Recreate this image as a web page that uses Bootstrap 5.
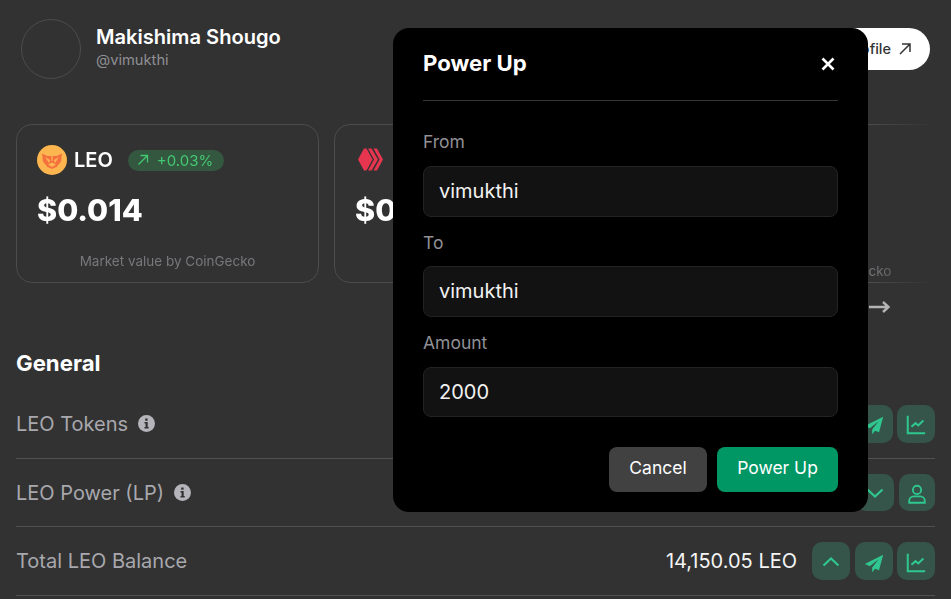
<!DOCTYPE html>
<html lang="en">
<head>
  <meta charset="UTF-8" />
  <meta name="viewport" content="width=device-width, initial-scale=1" />
  <title>Wallet - Power Up</title>
  <link href="https://cdn.jsdelivr.net/npm/bootstrap@5.3.0/dist/css/bootstrap.min.css" rel="stylesheet" />
  <style>
    html, body { height: 599px; overflow: hidden; }
    body { background: #323232; font-family: Inter, "Liberation Sans", sans-serif; color: #fff; }
    .wallet-page { padding: 19px 16px 0 16px; }
    .profile-head { height: 105px; padding-left: 5px; padding-right: 5px; }
    .name-gap { gap: 15px; }
    .avatar-ring { width: 60px; height: 60px; border: 1px solid #4c4c4c; border-radius: 50%; }
    .user-name { font-size: 20.1px; font-weight: 600; line-height: 24px; margin-top: 6px; }
    .user-handle { font-size: 14.7px; line-height: 20px; color: #8f8f95; margin-top: 1px; }
    .profile-btn { height: 42px; margin-top: 9px; padding: 0 19px 0 22px; border-radius: 21px; background: #fff; color: #333; font-size: 14.5px; font-weight: 500; border: 0; }
    .slider-mask { width: 919px; gap: 15px; overflow: hidden; -webkit-mask-image: linear-gradient(to right, #000 93%, transparent 100%); mask-image: linear-gradient(to right, #000 93%, transparent 100%); }
    .price-box { flex: 0 0 303px; height: 159px; border: 1px solid #4c4c4c; border-radius: 16px; padding: 20px 20px 0 20px; background: transparent; }
    .coin-head { gap: 7px; }
    .coin-name { font-size: 20px; font-weight: 600; line-height: 30px; }
    .trend-chip { height: 21px; padding: 0 11px 0 9px; border-radius: 11px; background: #33573f; color: #45c873; font-size: 15px; line-height: 21px; margin-left: 8px; }
    .price-value { font-size: 30.5px; font-weight: 800; line-height: 36px; margin-top: 17px; }
    .source-note { font-size: 13.5px; color: #77777c; text-align: center; margin-top: 24px; line-height: 18px; }
    .slide-arrows { height: 48px; padding-right: 45px; color: #b4b4b4; }
    .section-title { font-size: 22.2px; font-weight: 700; line-height: 28px; margin: 18px 0 13px 0; }
    .balance-row { height: 68.7px; border-bottom: 1px solid #515155; }
    .row-label { font-size: 20px; color: #a8a8ae; gap: 10px; }
    .row-value { font-size: 20px; font-weight: 400; color: #f4f4f4; margin-right: 11px; }
    .tile-set { gap: 4px; }
    .tile-set-wide { gap: 5px; }
    .icon-tile { width: 38px; height: 38px; padding: 0; border: 0; border-radius: 10px; background: #35544a; color: #2fc78f; flex: none; }
    .icon-tile svg { width: 22px; height: 22px; }
    .icon-tile .chev-icon { width: 24px; height: 24px; }
    .tile-short { height: 37px; }
    .tile-narrow { width: 36px; }
    .tile-mid { margin-right: 1px; }
    .up-dialog { width: 475px; margin: 28px 0 0 393px; }
    .up-panel { height: 484px; background: #000; border: 0; border-radius: 16px; padding: 0 30px; color: #fff; }
    .up-panel .modal-header { height: 73px; padding: 0; border-bottom: 1px solid #37373b; }
    .up-panel .modal-title { font-size: 22.2px; font-weight: 700; margin-top: -2px; }
    .x-btn { background: none; border: 0; padding: 0; color: #fff; width: 20px; height: 20px; }
    .up-panel .modal-body { padding: 29px 0 0 0; flex: 0 0 auto; }
    .field-label { font-size: 17.5px; color: #909096; line-height: 24px; margin: 0 0 12px 0; display: block; }
    .field-gap { margin-top: 14px; margin-bottom: 11px; }
    .field-last { margin-bottom: 12px; }
    .up-panel .form-control { height: 51px; background: #121212; border: 1px solid #232325; border-radius: 8px; color: #f2f2f2; font-size: 20px; padding: 0 15px 2px 15px; }
    .up-panel .input-last { height: 50px; padding-bottom: 0; }
    .up-panel .modal-footer { padding: 30px 0 0 0; border: 0; gap: 10px; }
    .up-panel .modal-footer .btn { margin: 0; height: 45px; font-size: 17.5px; font-weight: 400; border: 0; border-radius: 8px; color: #fff; padding: 0 0 2px 0; }
    .btn-cancel { width: 98px; background: #414141; }
    .btn-power { width: 121px; background: #019765; }
  </style>
</head>
<body>
  <div class="wallet-page">
    <div class="profile-head d-flex justify-content-between align-items-start">
      <div class="d-flex name-gap">
        <div class="avatar-ring"></div>
        <div>
          <div class="user-name">Makishima Shougo</div>
          <div class="user-handle">@vimukthi</div>
        </div>
      </div>
      <button class="btn profile-btn d-flex align-items-center gap-2">View Profile
        <svg width="12" height="12" viewBox="0 0 12 12" fill="none" stroke="currentColor" stroke-width="1.500"><path d="M1 11 11 1M3 1h8v8"/></svg>
      </button>
    </div>

    <div class="slider-mask d-flex">
      <div class="price-box">
        <div class="d-flex align-items-center coin-head">
          <svg width="30" height="30" viewBox="0 0 30 30">
            <circle cx="15" cy="15" r="15" fill="#fdb64f"/>
            <path d="M5 8.500l5.500 2.500h9L25 8.500l-1 8-4.500 5.500-4.500 2-4.500-2L6 16.500z" fill="#f4713f"/>
            <path d="M8 12l5 3-1 3zM22 12l-5 3 1 3zM11 19.500l4-2 4 2-4 2.500z" fill="#fdb64f"/>
            <path d="M15 11v5" stroke="#fdb64f" stroke-width="1.200"/>
          </svg>
          <span class="coin-name">LEO</span>
          <span class="trend-chip d-inline-flex align-items-center gap-2">
            <svg width="12" height="12" viewBox="0 0 12 12" fill="none" stroke="currentColor" stroke-width="1.300"><path d="M1.500 10.500 10.500 1.500M3.500 1.500h7v7"/></svg>+0.03%</span>
        </div>
        <div class="price-value">$0.014</div>
        <div class="source-note">Market value by CoinGecko</div>
      </div>
      <div class="price-box">
        <div class="d-flex align-items-center coin-head">
          <svg width="30" height="30" viewBox="0 0 30 30" fill="#e5354f">
            <path d="M3 14.500 9 3.500h2.500l6 11-6 11H9z"/>
            <path d="M13 3.500h3.500l6.500 11-6.500 11H13l6-11z"/>
            <path d="M18.500 3.500H22l6 11-6 11h-3.500l6-11z"/>
          </svg>
          <span class="coin-name">HIVE</span>
        </div>
        <div class="price-value">$0.30</div>
        <div class="source-note">Market value by CoinGecko</div>
      </div>
      <div class="price-box">
        <div class="price-value">&nbsp;</div>
        <div class="source-note mt-5 pt-3">Market value by CoinGecko</div>
      </div>
    </div>

    <div class="slide-arrows d-flex align-items-center justify-content-end">
      <svg width="21" height="14" viewBox="0 0 21 14" fill="none" stroke="currentColor" stroke-width="2.400"><path d="M0 7h19M14 2l5.500 5-5.500 5"/></svg>
    </div>

    <h2 class="section-title">General</h2>

    <div class="balance-row d-flex align-items-center justify-content-between">
      <div class="row-label d-flex align-items-center">LEO Tokens
        <svg width="17" height="17" viewBox="0 0 17 17"><circle cx="8.500" cy="8.500" r="8.500" fill="#b4b4ba"/><path d="M7.200 3.500h2.400v2.200H7.200zM6.500 7h3.200v5h1v1.500H6.500V12h1V8.500h-1z" fill="#323232"/></svg>
      </div>
      <div class="d-flex align-items-center tile-set">
        <button class="btn icon-tile tile-mid"><svg class="chev-icon" viewBox="0 0 24 24" fill="none" stroke="currentColor" stroke-width="2.200"><path d="M4.500 15.500l7.500-7 7.500 7"/></svg></button>
        <button class="btn icon-tile"><svg viewBox="0 0 24 24" fill="currentColor"><path d="M22 3 2 13l5.500 2.500L17 8l-7 9v5l3.300-3.700L17.500 20z"/></svg></button>
        <button class="btn icon-tile"><svg viewBox="0 0 24 24" fill="none" stroke="currentColor" stroke-width="2.200"><path d="M3 2v19h19M7 14l4.500-4 3 2.500L20 7"/></svg></button>
      </div>
    </div>

    <div class="balance-row d-flex align-items-center justify-content-between">
      <div class="row-label d-flex align-items-center">LEO Power (LP)
        <svg width="17" height="17" viewBox="0 0 17 17"><circle cx="8.500" cy="8.500" r="8.500" fill="#b4b4ba"/><path d="M7.200 3.500h2.400v2.200H7.200zM6.500 7h3.200v5h1v1.500H6.500V12h1V8.500h-1z" fill="#323232"/></svg>
      </div>
      <div class="d-flex align-items-center tile-set-wide">
        <button class="btn icon-tile tile-short"><svg class="chev-icon" viewBox="0 0 24 24" fill="none" stroke="currentColor" stroke-width="2.200"><path d="M4.500 8.500l7.500 7 7.500-7"/></svg></button>
        <button class="btn icon-tile tile-short tile-narrow"><svg viewBox="0 0 24 24" fill="none" stroke="currentColor" stroke-width="2"><circle cx="12" cy="7.500" r="4.500"/><path d="M3.500 21.500v-2c0-3 2.500-5 5-5h7c2.500 0 5 2 5 5v2z"/></svg></button>
      </div>
    </div>

    <div class="balance-row d-flex align-items-center justify-content-between">
      <div class="row-label">Total LEO Balance</div>
      <div class="d-flex align-items-center tile-set">
        <span class="row-value">14,150.05 LEO</span>
        <button class="btn icon-tile tile-mid"><svg class="chev-icon" viewBox="0 0 24 24" fill="none" stroke="currentColor" stroke-width="2.200"><path d="M4.500 15.500l7.500-7 7.500 7"/></svg></button>
        <button class="btn icon-tile"><svg viewBox="0 0 24 24" fill="currentColor"><path d="M22 3 2 13l5.500 2.500L17 8l-7 9v5l3.300-3.700L17.500 20z"/></svg></button>
        <button class="btn icon-tile"><svg viewBox="0 0 24 24" fill="none" stroke="currentColor" stroke-width="2.200"><path d="M3 2v19h19M7 14l4.500-4 3 2.500L20 7"/></svg></button>
      </div>
    </div>
  </div>

  <div class="modal d-block" tabindex="-1">
    <div class="modal-dialog up-dialog">
      <div class="modal-content up-panel">
        <div class="modal-header justify-content-between">
          <h5 class="modal-title">Power Up</h5>
          <button class="x-btn d-flex" aria-label="Close">
            <svg width="20" height="20" viewBox="0 0 20 20" fill="none" stroke="currentColor" stroke-width="2.600"><path d="M4.500 4.500l11 11M15.500 4.500l-11 11"/></svg>
          </button>
        </div>
        <div class="modal-body">
          <label class="field-label">From</label>
          <input class="form-control" type="text" value="vimukthi" />
          <label class="field-label field-gap">To</label>
          <input class="form-control" type="text" value="vimukthi" />
          <label class="field-label field-gap field-last">Amount</label>
          <input class="form-control input-last" type="text" value="2000" />
        </div>
        <div class="modal-footer justify-content-end">
          <button class="btn btn-cancel">Cancel</button>
          <button class="btn btn-power">Power Up</button>
        </div>
      </div>
    </div>
  </div>

  <script src="https://cdn.jsdelivr.net/npm/bootstrap@5.3.0/dist/js/bootstrap.bundle.min.js"></script>
</body>
</html>
